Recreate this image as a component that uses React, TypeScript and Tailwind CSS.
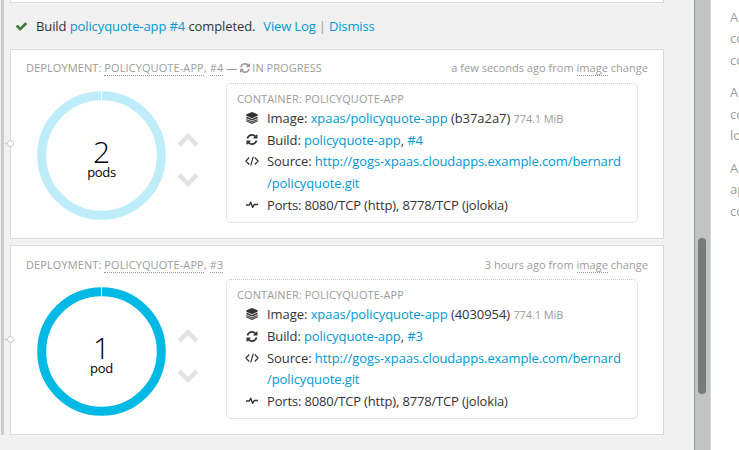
import type { ReactNode } from "react";

function RefreshIcon({ className }: { className: string }) {
  return (
    <svg viewBox="0 0 1536 1536" className={className} fill="currentColor">
      <path d="M1511 928q0 5-1 7-64 268-268 434.5t-478 166.5q-146 0-282.5-55t-243.5-157l-129 129q-19 19-45 19t-45-19-19-45v-448q0-26 19-45t45-19h448q26 0 45 19t19 45-19 45l-137 137q71 66 161 102t187 36q134 0 250-65t186-179q11-17 53-117 8-23 30-23h192q13 0 22.5 9.5t9.5 22.5zm25-800v448q0 26-19 45t-45 19h-448q-26 0-45-19t-19-45 19-45l138-138q-148-137-349-137-134 0-250 65t-186 179q-11 17-53 117-8 23-30 23h-199q-13 0-22.5-9.5t-9.5-22.5v-7q65-268 270-434.5t480-166.5q146 0 284 55.5t245 156.5l130-129q19-19 45-19t45 19 19 45z" />
    </svg>
  );
}

function LayersIcon() {
  return (
    <svg viewBox="0 0 12 12" className="h-3 w-3" fill="currentColor">
      <path d="M6 0 11.6 2.2V3.8L6 6.200 .4 3.800V2.2Z" />
      <path d="M.4 4.500 6 6.900l5.600-2.400v1.700L6 8.600.4 6.200ZM.4 6.900 6 9.300l5.600-2.400V9.500L6 12 .4 9.500Z" />
      <path d="m.7 8.300 5.300 2.300L11.300 8.300" fill="none" stroke="white" strokeWidth=".5" />
    </svg>
  );
}

function CodeIcon() {
  return (
    <svg viewBox="0 0 14 10" className="h-[10px] w-[14px]" fill="none" stroke="currentColor" strokeWidth="1.2">
      <path d="M4.200 1.500.9 5l3.300 3.500M9.800 1.500 13.100 5 9.800 8.500M8.300.7 5.700 9.300" />
    </svg>
  );
}

function PulseIcon() {
  return (
    <svg viewBox="0 0 12 8" className="h-2 w-3" fill="none" stroke="currentColor" strokeWidth="1.400" strokeLinejoin="round">
      <path d="M0 4h3.300L4.700 1.200l2 5.200L8.300 3.500H12" />
    </svg>
  );
}

function Chevron({ down = false }: { down?: boolean }) {
  return (
    <svg viewBox="0 0 22 14" className={down ? "h-[14px] w-[22px] rotate-180" : "h-[14px] w-[22px]"}>
      <path d="M2 12.200 11 3.200l9 9" fill="none" stroke="#e3e3e3" strokeWidth="4.600" />
    </svg>
  );
}

function Link({ children }: { children: ReactNode }) {
  return <a className="text-[#0099d3]">{children}</a>;
}

function Dotted({ children }: { children: ReactNode }) {
  return <span className="inline-block h-[15px] border-b border-dotted border-[#999] leading-[14px]">{children}</span>;
}

function Row({ icon, children }: { icon: ReactNode; children: ReactNode }) {
  return (
    <div className="flex leading-[21.667px]">
      <div className="ml-[7px] flex h-[20px] w-[16px] shrink-0 items-center justify-center">{icon}</div>
      <div className="ml-[7px] whitespace-nowrap">{children}</div>
    </div>
  );
}

type Deployment = {
  build: string;
  count: number;
  unit: string;
  color: string;
  hash: string;
  age: string;
  running?: boolean;
};

function DeploymentCard({ build, count, unit, color, hash, age, running }: Deployment) {
  return (
    <section className="relative h-[190px] w-[654px] border border-[#d9d9d9] bg-white">
      <div className="absolute top-[93px] -left-[7px] h-px w-[5px] bg-[#d1d1d1]" />
      <div className="absolute top-[90px] -left-[4px] h-[7px] w-[7px] rounded-full border border-[#c8c8c8] bg-white" />
      <header className={`flex h-[33px] items-start justify-between pr-[15px] pl-[15px] text-[11px] leading-[14px] text-[#9c9c9c] ${running ? "pt-[11px]" : "pt-[12px]"}`}>
        <div className="flex whitespace-pre tracking-[0.09px]">
          <span>DEPLOYMENT: </span>
          <Dotted>POLICYQUOTE-APP</Dotted>
          <span>, </span>
          <Dotted>{build}</Dotted>
          {running && (
            <>
              <span> — </span>
              <RefreshIcon className="mt-[2px] mr-[2px] h-[10px] w-[10px]" />
              <span className="tracking-[0.040px]">IN PROGRESS</span>
            </>
          )}
        </div>
        <div className="tracking-[0.03px]">
          {age} from <Dotted>image</Dotted> change
        </div>
      </header>
      <div className="flex">
        <div className="relative mt-[8px] ml-[26px] h-[129px] w-[129px]">
          <svg viewBox="0 0 129 129" className="h-full w-full">
            <circle cx="64.500" cy="64.500" r="59.800" fill="none" stroke={color} strokeWidth="9" />
            <path d="M64.500 0v10" stroke="white" />
          </svg>
          <div className="absolute inset-0 flex flex-col items-center pt-[47px] text-black">
            <span className="text-[30px] leading-[28px] font-light">{count}</span>
            <span className="-mt-[2px] text-[13px] leading-[16px] tracking-[-0.300px]">{unit}</span>
          </div>
        </div>
        <div className="mt-[50px] ml-[11px] flex w-[22px] flex-col gap-[26px]">
          <Chevron />
          <Chevron down />
        </div>
        <div className="ml-[27px] h-[140px] w-[412px] rounded-[5px] border border-dotted border-[#ccc] pt-[7px] pl-[10px] text-[13px] tracking-[-0.095px] text-[#333]">
          <div className={`text-[11px] leading-[15px] tracking-[0.08px] text-[#9c9c9c] ${running ? "h-[17px]" : "h-[17.340px]"}`}>CONTAINER: POLICYQUOTE-APP</div>
          <Row icon={<LayersIcon />}>
            <span className="tracking-[-0.060px]">Image: <Link>xpaas/policyquote-app</Link> ({hash}) <span className="text-[11px] tracking-[-0.100px] text-[#9c9c9c]">774.1 MiB</span></span>
          </Row>
          <Row icon={<RefreshIcon className="h-[11px] w-[12px]" />}>
            Build: <Link>policyquote-app</Link>, <Link>{build}</Link>
          </Row>
          <Row icon={<CodeIcon />}>
            Source: <Link>http://gogs-xpaas.cloudapps.example.com/bernard<br />/policyquote.git</Link>
          </Row>
          <Row icon={<PulseIcon />}><span className="tracking-[-0.160px]">Ports: 8080/TCP (http), 8778/TCP (jolokia)</span></Row>
        </div>
      </div>
    </section>
  );
}

export default function App() {
  return (
    <div className="flex h-[450px] w-[739px] overflow-hidden bg-[#f1f1f1] font-['Open_Sans',sans-serif] text-[13px] text-[#333]">
      <div className="ml-px h-[435px] w-[3px] shrink-0 bg-[#cbcbcb]" />
      <main className="ml-[6px] w-[684px] shrink-0">
        <div className="h-[3px] w-[654px] border-r border-b border-l border-[#d9d9d9] bg-white" />
        <div className="flex h-[46px] items-center pt-px pl-[6px] tracking-[-0.100px] whitespace-pre">
          <svg viewBox="120 320 1552 1202" className="mr-[9px] h-[9px] w-[11px]" fill="#3f7d3f">
            <path d="M1671 566q0 40-28 68l-724 724-136 136q-28 28-68 28t-68-28l-136-136-362-362q-28-28-28-68t28-68l136-136q28-28 68-28t68 28l294 295 656-657q28-28 68-28t68 28l136 136q28 28 28 68z" />
          </svg>
          <span>Build <Link>policyquote-app #4</Link> completed.</span>
          <span className="ml-[8px] tracking-[-0.160px] text-[#999]"><Link>View Log</Link> | <Link>Dismiss</Link></span>
        </div>
        <div className="flex flex-col gap-[6px]">
          <DeploymentCard build="#4" count={2} unit="pods" color="#beedf9" hash="b37a2a7" age="a few seconds ago" running />
          <DeploymentCard build="#3" count={1} unit="pod" color="#00b9e4" hash="4030954" age="3 hours ago" />
        </div>
      </main>
      <div className="h-full w-[17px] shrink-0 border-r border-l border-r-[#d5d6d5] border-l-[#999] bg-[#c2c4c3] pt-[238px] pl-[3px]">
        <div className="h-[156px] w-[8px] rounded-full bg-[#777b7b]" />
      </div>
      <aside className="flex w-[28px] shrink-0 flex-col gap-[10.500px] overflow-hidden bg-white pt-[6.500px] pl-[19px] leading-[21.667px] whitespace-nowrap text-[#9c9c9c]">
        <p>A<br />co<br />co</p>
        <p>A<br />co<br />lo</p>
        <p>A<br />ap<br />co</p>
      </aside>
    </div>
  );
}
